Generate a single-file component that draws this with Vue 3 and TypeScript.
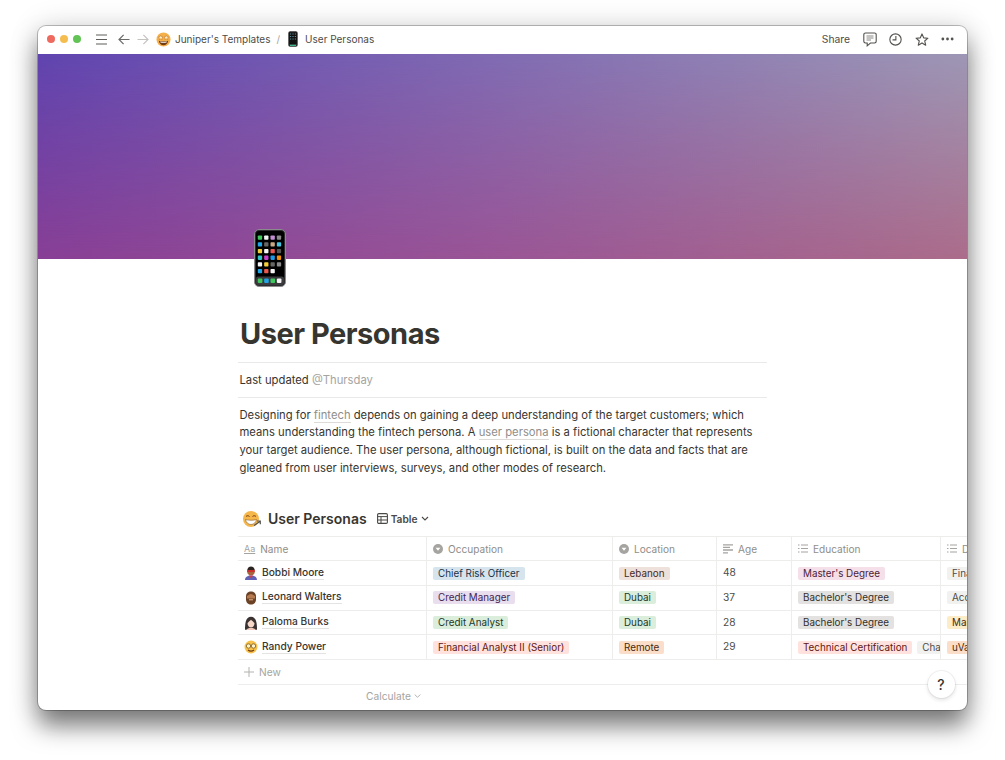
<script setup lang="ts">
type Tag = { t: string; c: string }
type Row = { name: string; face: string; occ: Tag; loc: Tag; age: number; edu: Tag[]; last: Tag }

const rows: Row[] = [
  { name: 'Bobbi Moore', face: 'hero', occ: { t: 'Chief Risk Officer', c: 'blue' }, loc: { t: 'Lebanon', c: 'brown' }, age: 48, edu: [{ t: "Master's Degree", c: 'pink' }], last: { t: 'Finance', c: 'light' } },
  { name: 'Leonard Walters', face: 'beard', occ: { t: 'Credit Manager', c: 'purple' }, loc: { t: 'Dubai', c: 'green' }, age: 37, edu: [{ t: "Bachelor's Degree", c: 'gray' }], last: { t: 'Accounting', c: 'light' } },
  { name: 'Paloma Burks', face: 'woman', occ: { t: 'Credit Analyst', c: 'green' }, loc: { t: 'Dubai', c: 'green' }, age: 28, edu: [{ t: "Bachelor's Degree", c: 'gray' }], last: { t: 'Marketing', c: 'yellow' } },
  { name: 'Randy Power', face: 'nerd', occ: { t: 'Financial Analyst II (Senior)', c: 'rose' }, loc: { t: 'Remote', c: 'orange' }, age: 29, edu: [{ t: 'Technical Certification', c: 'rose' }, { t: 'Chartered', c: 'light' }], last: { t: 'uVa', c: 'orange' } }
]

const appColors = [
  '#3fc75d', '#f4f4f4', '#c58fd6', '#8a8a8a',
  '#20a4e8', '#666666', '#c9a985', '#45c5e0',
  '#f2cf3a', '#f4f4f4', '#e8584f', '#555555',
  '#2fc4c9', '#c93fc9', '#1d9be8', '#f0900f',
  '#f4f4f4', '#f2cf3a', '#666666', '#8a8a8a',
  '#20a4e8', '#e8584f', '#f4f4f4', 'none'
]
const dockColors = ['#3fc75d', '#20a4e8', '#3fc75d', '#f4f4f4']
const apps = appColors.map((fill, i) => ({ fill, x: 3.8 + (i % 4) * 6.35, y: 6.5 + Math.floor(i / 4) * 6.7 }))
const dock = dockColors.map((fill, i) => ({ fill, x: 3.8 + i * 6.35 }))
</script>

<template>
  <div class="stage">
    <div class="window">
      <header class="topbar">
        <div class="lights">
          <span class="dot dot-red"></span>
          <span class="dot dot-amber"></span>
          <span class="dot dot-green"></span>
        </div>
        <svg class="menu" width="11" height="11" viewBox="0 0 11 11"><path d="M0 1h11M0 5.500h11M0 10h11" stroke="#5f5e5b" stroke-width="1.200" fill="none" /></svg>
        <svg class="arrow" width="12" height="11" viewBox="0 0 12 11"><path d="M11.500 5.500H1M5.600 .8 1 5.500l4.600 4.700" stroke="#6b6a67" stroke-width="1.200" fill="none" /></svg>
        <svg class="arrow forward" width="12" height="11" viewBox="0 0 12 11"><path d="M.5 5.500H11M6.400 .8 11 5.500l-4.600 4.700" stroke="#c4c3c0" stroke-width="1.200" fill="none" /></svg>
        <svg class="crumb-emoji" width="15" height="15" viewBox="0 0 16 16">
          <circle cx="8" cy="8" r="7.500" fill="#f6b04a" />
          <path d="M3 9.200c3 1 7 1 10 0-.5 3-2.500 4.800-5 4.800S3.500 12.200 3 9.200z" fill="#6f3a14" />
          <path d="M4.400 10c2.300.5 4.900.5 7.200 0l-.4 1.200c-2 .4-4.400.4-6.400 0z" fill="#fff" />
          <path d="m5 3.600.8 1.500 1.700.2-1.200 1.200.3 1.600L5 7.300 3.400 8.100l.3-1.600-1.200-1.200 1.700-.2zM11 3.600l.8 1.500 1.700.2-1.200 1.200.3 1.600-1.600-.8-1.600.8.300-1.600-1.200-1.200 1.700-.2z" fill="#fff1c4" stroke="#a85c1e" stroke-width=".4" />
        </svg>
        <span class="crumb">Juniper's Templates</span>
        <span class="slash">/</span>
        <svg class="crumb-phone" width="10" height="16" viewBox="0 0 10 16">
          <rect x=".3" y=".3" width="9.400" height="15.400" rx="1.800" fill="#2a2a2c" />
          <rect x="1.200" y="1.500" width="7.600" height="11.500" fill="#111" />
          <path d="M2 3h1.200M4.400 3h1.200M6.800 3H8M2 5.500h1.200M4.400 5.500h1.200M6.800 5.500H8M2 8h1.200M4.400 8h1.200M6.800 8H8" stroke="#5c8f99" stroke-width="1.200" />
          <path d="M2 14.300h6" stroke="#3fb98a" stroke-width="1.200" />
        </svg>
        <span class="crumb">User Personas</span>

        <div class="actions">
          <span class="share">Share</span>
          <svg width="14" height="15" viewBox="0 0 14 15"><path d="M2.500 1h9A1.700 1.700 0 0 1 13.200 2.700v6.600A1.700 1.700 0 0 1 11.500 11H7.400l-3.200 2.800V11H2.500A1.700 1.700 0 0 1 .8 9.300V2.700A1.700 1.700 0 0 1 2.500 1z" fill="none" stroke="#55534f" stroke-width="1.100" /><path d="M3.500 4h7M3.500 6h7M3.500 8h4.500" stroke="#8a8985" stroke-width="1" /></svg>
          <svg width="13" height="13" viewBox="0 0 14 14"><circle cx="7" cy="7" r="6.100" fill="none" stroke="#55534f" stroke-width="1.200" /><path d="M7.400 3.200v4.200H3.800" fill="none" stroke="#55534f" stroke-width="1.200" /></svg>
          <svg width="14" height="13" viewBox="0 0 15 14"><path d="m7.500 1 1.800 4.200 4.600.4-3.500 3 1.100 4.500-4-2.400-4 2.400 1.100-4.500-3.500-3 4.600-.4z" fill="none" stroke="#55534f" stroke-width="1.200" stroke-linejoin="round" /></svg>
          <svg width="13" height="4" viewBox="0 0 14 4"><circle cx="2" cy="2" r="1.500" fill="#55534f" /><circle cx="7" cy="2" r="1.500" fill="#55534f" /><circle cx="12" cy="2" r="1.500" fill="#55534f" /></svg>
        </div>
      </header>

      <div class="cover"></div>

      <main class="page">
        <div class="article">
          <svg class="page-icon" width="32" height="58" viewBox="0 0 32 58">
            <rect x=".5" y=".5" width="31" height="57" rx="4.500" fill="#2d2d2f" stroke="#8b8b8e" />
            <rect x="2" y="2" width="28" height="54" rx="3" fill="#000" />
            <rect x="2" y="47.500" width="28" height="8.500" rx="2" fill="#3b3b3d" />
            <rect v-for="(a, i) in apps" :key="i" :x="a.x" :y="a.y" width="4.300" height="4.300" rx=".8" :fill="a.fill" />
            <rect v-for="(d, i) in dock" :key="'d' + i" :x="d.x" y="49.500" width="4.600" height="4.600" rx="1" :fill="d.fill" />
          </svg>
          <h1 class="title">User Personas</h1>
          <p class="updated">Last updated <span class="muted">@Thursday</span></p>
          <p class="intro">
            Designing for <span class="link">fintech</span> depends on gaining a deep understanding of the target customers; which<br />
            means understanding the fintech persona. A <span class="link">user persona</span> is a fictional character that represents<br />
            your target audience. The user persona, although fictional, is built on the data and facts that are<br />
            gleaned from user interviews, surveys, and other modes of research.
          </p>
        </div>

        <section class="database">
          <div class="db-head">
            <svg width="20" height="20" viewBox="0 0 20 20">
              <circle cx="9" cy="10" r="8" fill="#f5b64a" />
              <path d="M4 7.500c1-1 2.500-1 3.500 0M10.500 7.500c1-1 2.500-1 3.500 0" stroke="#6f3a14" stroke-width="1" fill="none" />
              <path d="M3.500 10.500c3.500 1 7.500 1 11 0-.5 3-2.800 5-5.500 5s-5-2-5.500-5z" fill="#fff" stroke="#8a5a2a" stroke-width=".6" />
              <path d="M12 16.500 18 12.500M15 12h3.300v3.300" stroke="#55534f" stroke-width="1.200" fill="none" />
            </svg>
            <h2 class="db-title">User Personas</h2>
            <svg class="table-icon" width="11" height="11" viewBox="0 0 11 11"><rect x=".6" y=".6" width="9.800" height="9.800" rx="1.200" fill="none" stroke="#4a4945" stroke-width="1.100" /><path d="M.6 3.600h9.800M.6 7h9.800M4 3.600v6.800" stroke="#4a4945" stroke-width="1" /></svg>
            <span class="view">Table</span>
            <svg width="8" height="5" viewBox="0 0 8 5"><path d="m1 1 3 3 3-3" fill="none" stroke="#4a4945" stroke-width="1.100" /></svg>
          </div>

          <div class="grid head-row">
            <div class="cell head">
              <span class="aa">Aa</span><span>Name</span>
            </div>
            <div class="cell head">
              <svg class="head-icon" width="10" height="10" viewBox="0 0 10 10"><circle cx="5" cy="5" r="5" fill="#a5a4a1" /><path d="M2.600 3.800h4.800L5 6.800z" fill="#fff" /></svg><span>Occupation</span>
            </div>
            <div class="cell head">
              <svg class="head-icon" width="10" height="10" viewBox="0 0 10 10"><circle cx="5" cy="5" r="5" fill="#a5a4a1" /><path d="M2.600 3.800h4.800L5 6.800z" fill="#fff" /></svg><span>Location</span>
            </div>
            <div class="cell head">
              <svg class="head-icon" width="10" height="10" viewBox="0 0 10 10"><path d="M0 .8h10M0 3.400h7M0 6h10M0 8.800h5" stroke="#a5a4a1" stroke-width="1.300" /></svg><span>Age</span>
            </div>
            <div class="cell head">
              <svg class="head-icon" width="10" height="9" viewBox="0 0 10 9"><path d="M3 1h7M3 4.500h7M3 8h7M0 1h1.500M0 4.500h1.500M0 8h1.500" stroke="#a5a4a1" stroke-width="1.100" /></svg><span>Education</span>
            </div>
            <div class="cell head">
              <svg class="head-icon" width="10" height="9" viewBox="0 0 10 9"><path d="M3 1h7M3 4.500h7M3 8h7M0 1h1.500M0 4.500h1.500M0 8h1.500" stroke="#a5a4a1" stroke-width="1.100" /></svg><span>Degree</span>
            </div>
          </div>

          <div v-for="r in rows" :key="r.name" class="grid body-row">
            <div class="cell name">
              <svg class="face" width="14" height="14" viewBox="0 0 14 14">
                <template v-if="r.face === 'hero'">
                  <path d="M1 14c0-3 2.500-4.500 6-4.500S13 11 13 14z" fill="#5f62b5" />
                  <path d="M5 9.500h4L7 12.500z" fill="#d83a3a" />
                  <circle cx="7" cy="5.500" r="3.800" fill="#a8663f" />
                  <path d="M3.200 4h7.600v2H3.200z" fill="#c9302c" />
                  <path d="M3.300 4c.3-2.500 2-3.500 3.700-3.500S10.400 1.500 10.700 4z" fill="#2d2320" />
                </template>
                <template v-else-if="r.face === 'beard'">
                  <path d="M2 5.500c0-3.400 2.200-5 5-5s5 1.600 5 5v3c0 3-2.200 5-5 5s-5-2-5-5z" fill="#6b4226" />
                  <path d="M3 5c1.200-.5 2.800-2 4-2s2.800 1.500 4 2v2.500H3z" fill="#b57a50" />
                  <path d="M5 8.800h4" stroke="#e5b38c" stroke-width="1" />
                </template>
                <template v-else-if="r.face === 'woman'">
                  <path d="M1 13.800c0-6 .5-13 6-13s6 7 6 13z" fill="#3a3230" />
                  <path d="M2.500 14c.5-1.500 2-2 4.500-2s4 .5 4.500 2z" fill="#f2c9b8" />
                  <path d="M3.500 7c1-1 2.500-2.500 3.500-3.200C8 4.500 9.500 6 10.500 7c0 2.500-1.500 4.500-3.500 4.500S3.500 9.500 3.500 7z" fill="#f8d8c8" />
                </template>
                <template v-else>
                  <circle cx="7" cy="7" r="6.500" fill="#f7c14a" />
                  <circle cx="4.500" cy="6" r="2.200" fill="#fff3c9" stroke="#7a5a1e" stroke-width=".8" />
                  <circle cx="9.500" cy="6" r="2.200" fill="#fff3c9" stroke="#7a5a1e" stroke-width=".8" />
                  <path d="M4 10c1.800 1.300 4.200 1.300 6 0" stroke="#6f3a14" stroke-width="1.200" fill="none" />
                </template>
              </svg>
              <span class="name-text">{{ r.name }}</span>
            </div>
            <div class="cell"><span class="tag" :class="r.occ.c">{{ r.occ.t }}</span></div>
            <div class="cell"><span class="tag" :class="r.loc.c">{{ r.loc.t }}</span></div>
            <div class="cell age">{{ r.age }}</div>
            <div class="cell tags"><span v-for="e in r.edu" :key="e.t" class="tag" :class="e.c">{{ e.t }}</span></div>
            <div class="cell"><span class="tag" :class="r.last.c">{{ r.last.t }}</span></div>
          </div>

          <div class="new-row">
            <svg width="10" height="10" viewBox="0 0 10 10"><path d="M5 0v10M0 5h10" stroke="#b3b2af" stroke-width="1" /></svg>
            <span>New</span>
          </div>
          <div class="calc-row">
            <span>Calculate</span>
            <svg width="7" height="4" viewBox="0 0 7 4"><path d="m.7.5 2.800 2.800L6.300.5" fill="none" stroke="#b3b2af" stroke-width="1" /></svg>
          </div>
        </section>

        <button class="help" type="button">?</button>
      </main>
    </div>
  </div>
</template>

<style>
html, body { margin: 0; background: #fff; }
</style>

<style scoped>
.stage {
  width: 1005px;
  height: 760px;
  box-sizing: border-box;
  padding: 26px 38px 50px;
  font-family: Inter, "Liberation Sans", sans-serif;
  color: #37352f;
  overflow: hidden;
}
.window {
  position: relative;
  height: 100%;
  display: flex;
  flex-direction: column;
  border-radius: 8px;
  overflow: hidden;
  background: #fff;
  box-shadow: 0 0 0 1px rgba(0, 0, 0, .24), 0 16px 24px rgba(0, 0, 0, .5), 0 0 30px rgba(0, 0, 0, .14);
}
.topbar {
  height: 28px;
  box-sizing: border-box;
  flex: none;
  display: flex;
  align-items: center;
  padding: 0 0 2px 9px;
  font-size: 10px;
  color: #4d4c48;
}
.lights { display: flex; gap: 5px; margin-right: 15px; }
.dot { width: 8px; height: 8px; border-radius: 50%; }
.dot-red { background: #ee6a5f; }
.dot-amber { background: #f5bd4f; }
.dot-green { background: #61c454; }
.menu { margin-right: 11px; }
.arrow { margin-right: 7px; }
.forward { margin-right: 7px; }
.crumb-emoji { margin-right: 4px; }
.crumb-phone { margin-right: 7px; }
.slash { margin: 0 8px 0 6px; color: #a5a4a1; }
.actions { margin-left: auto; display: flex; align-items: center; gap: 12.500px; padding-right: 13px; }
.share { font-size: 10.300px; }

.cover {
  position: relative;
  height: 205px;
  flex: none;
  background: linear-gradient(to right, #6045b0 0%, #7e68b3 45%, #9e97b5 100%);
}
.cover::after {
  content: "";
  position: absolute;
  inset: 0;
  background: linear-gradient(to right, #883f95 0%, #9a5595 50%, #ab6c8a 100%);
  -webkit-mask-image: linear-gradient(to bottom, transparent 0%, #000 100%);
  mask-image: linear-gradient(to bottom, transparent 0%, #000 100%);
}

.page { position: relative; flex: 1; min-height: 0; }
.article { width: 529px; margin-left: 200px; }
.page-icon { position: relative; z-index: 1; display: block; margin: -30px 0 0 16px; }
.title {
  margin: 29px 0 0;
  padding: 0 0 11px 2px;
  font-size: 29px;
  line-height: 35px;
  font-weight: 700;
  letter-spacing: -.5px;
  border-bottom: 1px solid #e9e9e7;
}
.updated {
  margin: 0;
  height: 35px;
  box-sizing: border-box;
  padding-left: 1.500px;
  font-size: 11.250px;
  line-height: 35px;
  border-bottom: 1px solid #e9e9e7;
}
.muted { color: #a5a4a1; }
.intro {
  margin: 8.500px 0 0;
  padding-left: 1.500px;
  font-size: 11.250px;
  line-height: 17.700px;
}
.link { color: #8f8e8a; border-bottom: 1px solid #dcdbd8; }

.database { margin: 28px 0 0 200px; }
.db-head { display: flex; align-items: center; height: 27px; margin-bottom: 4px; padding-left: 4px; }
.db-title { margin: 0 10px 0 6px; font-size: 14px; line-height: 20px; font-weight: 600; }
.table-icon { margin-right: 3px; }
.view { margin-right: 3px; font-size: 10.200px; font-weight: 600; color: #4a4945; }

.grid {
  display: grid;
  grid-template-columns: 189px 186px 104px 75px 149px 150px;
  box-sizing: border-box;
  border-bottom: 1px solid #ededeb;
}
.head-row { height: 25px; border-top: 1px solid #ededeb; }
.body-row { height: 24.700px; }
.cell {
  display: flex;
  align-items: center;
  min-width: 0;
  overflow: hidden;
  padding-left: 6px;
  border-right: 1px solid #ededeb;
  font-size: 9.850px;
  white-space: nowrap;
}
.head { color: #8f8e8a; gap: 5px; font-size: 10.100px; }
.aa { font-size: 9px; color: #a5a4a1; text-decoration: underline; }
.head-icon { flex: none; }
.name { font-weight: 500; font-size: 10.200px; }
.face { flex: none; margin-right: 4px; }
.name-text { border-bottom: 1px solid #e4e3e1; line-height: 13px; margin-bottom: 1px; }
.age { color: #4d4c48; padding-bottom: 2px; font-size: 10.200px; }
.tags { gap: 5px; }
.tag { flex: none; padding: 0 5px; height: 13px; line-height: 13px; border-radius: 2px; }
.blue { background: #d6e4ee; color: #183347; }
.purple { background: #e8deee; color: #412454; }
.green { background: #dbeddb; color: #1c3829; }
.pink { background: #f5e0e9; color: #4c2337; }
.brown { background: #eee0da; color: #442a1e; }
.orange { background: #fadec9; color: #49290e; }
.gray { background: #e3e2e0; color: #32302c; }
.light { background: #f1f1ef; color: #4d4c48; }
.yellow { background: #fdecc8; color: #402c1b; }
.rose { background: #ffe2dd; color: #5d1715; }

.new-row {
  width: 729px;
  height: 25px;
  box-sizing: border-box;
  display: flex;
  align-items: center;
  gap: 5px;
  padding-left: 6px;
  font-size: 10.200px;
  color: #a5a4a1;
  border-bottom: 1px solid #ededeb;
}
.calc-row {
  display: flex;
  align-items: center;
  gap: 3px;
  height: 21px;
  padding-left: 128px;
  font-size: 10.200px;
  color: #a5a4a1;
}
.help {
  position: absolute;
  right: 12.500px;
  bottom: 12.500px;
  width: 27px;
  height: 27px;
  padding: 0;
  border: none;
  border-radius: 50%;
  background: #fff;
  box-shadow: 0 0 0 1px rgba(15, 15, 15, .05), 0 2px 4px rgba(15, 15, 15, .12);
  font: 500 14px Inter, "Liberation Sans", sans-serif;
  color: #37352f;
}
</style>
